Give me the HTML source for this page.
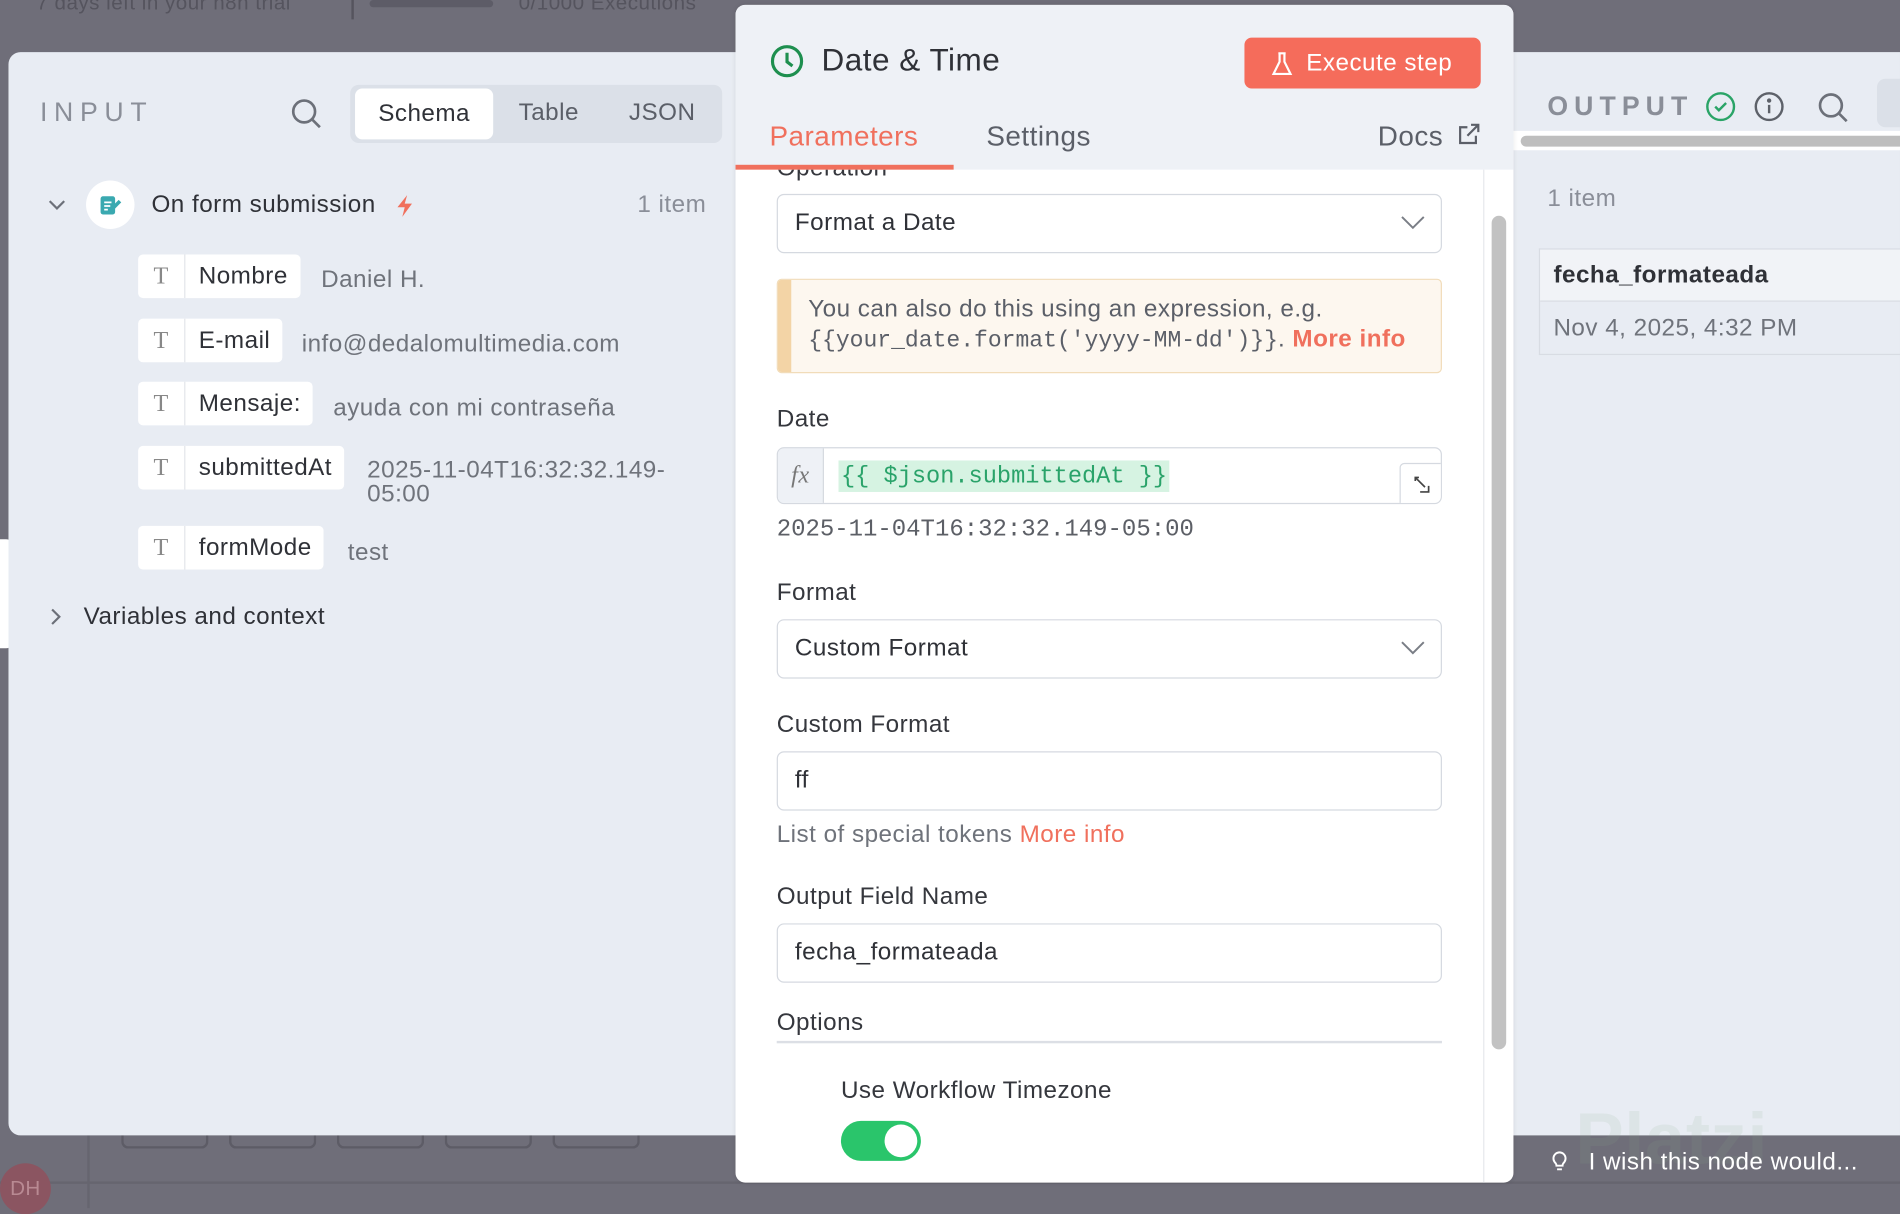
<!DOCTYPE html>
<html><head><meta charset="utf-8"><style>
html,body{margin:0;padding:0;width:1900px;height:1208px;overflow:hidden;background:#6f6e79;}
#w{position:absolute;left:0;top:0;width:1568px;height:997px;transform:scale(1.21173);transform-origin:0 0;font-family:"Liberation Sans",sans-serif;color:#35373d;letter-spacing:0.4px;}
.a{position:absolute;}
.mono{font-family:"Liberation Mono",monospace;letter-spacing:0;}
.lbl{position:absolute;left:641px;font-size:20px;color:#35373d;}
.inp{position:absolute;left:641px;width:549px;height:47px;border:1px solid #d5d9e0;border-radius:6px;background:#fff;box-sizing:border-box;font-size:20px;line-height:45px;padding-left:14px;color:#2f3137;}
.pill{position:absolute;left:114px;height:36px;background:#fff;border-radius:4px;display:flex;align-items:center;font-size:20px;color:#2f3137;}
.pill .t{width:38px;text-align:center;font-family:"Liberation Serif",serif;color:#888;font-size:20px;border-right:1px solid #e3e6ea;height:36px;line-height:36px;}
.pill .n{padding:0 10px 0 11px;}
.val{position:absolute;font-size:20px;color:#6f737b;}
</style></head><body><div id="w">
<!-- top bar -->
<div class="a" style="left:30px;top:-7px;font-size:17px;color:#55545e;">7 days left in your n8n trial</div>
<div class="a" style="left:290px;top:-4px;width:2px;height:20px;background:#55545e"></div>
<div class="a" style="left:305px;top:0;width:102px;height:6px;border-radius:3px;background:#5d5c67"></div>
<div class="a" style="left:428px;top:-7px;font-size:17px;color:#55545e;">0/1000 Executions</div>
<!-- bottom faint stuff -->
<div class="a" style="left:100px;top:930px;width:68px;height:16px;border:2px solid #5d5c66;border-top:none;border-radius:0 0 6px 6px"></div>
<div class="a" style="left:189px;top:930px;width:68px;height:16px;border:2px solid #5d5c66;border-top:none;border-radius:0 0 6px 6px"></div>
<div class="a" style="left:278px;top:930px;width:68px;height:16px;border:2px solid #5d5c66;border-top:none;border-radius:0 0 6px 6px"></div>
<div class="a" style="left:367px;top:930px;width:68px;height:16px;border:2px solid #5d5c66;border-top:none;border-radius:0 0 6px 6px"></div>
<div class="a" style="left:456px;top:930px;width:68px;height:16px;border:2px solid #5d5c66;border-top:none;border-radius:0 0 6px 6px"></div>
<div class="a" style="left:0;top:975px;width:1568px;height:2px;background:#66656f"></div>
<div class="a" style="left:72px;top:937px;width:2px;height:60px;background:#66656f"></div>
<div class="a" style="left:0;top:960px;width:42px;height:42px;border-radius:50%;background:#8b5561;color:#b98a93;font-size:17px;line-height:42px;text-align:center">DH</div>
<div class="a" style="left:0;top:445px;width:11px;height:90px;background:#fff;border-radius:0 6px 6px 0"></div>

<!-- input panel -->
<div class="a" style="left:7px;top:43px;width:640px;height:894px;background:#e8ecf3;border-radius:10px 0 0 10px"></div>
<div class="a" style="left:33px;top:80px;font-size:22px;letter-spacing:5.5px;color:#8a8e98">INPUT</div>
<svg class="a" style="left:240px;top:81px" width="26" height="26" viewBox="0 0 26 26" fill="none" stroke="#6c7079" stroke-width="2.2"><circle cx="11" cy="11" r="9"/><path d="M18 18l6 6"/></svg>
<div class="a" style="left:289px;top:70px;width:307px;height:48px;background:#dbe0e8;border-radius:7px"></div>
<div class="a" style="left:293px;top:73px;width:114px;height:42px;background:#fff;border-radius:6px;font-size:20px;line-height:42px;text-align:center;color:#2f3137">Schema</div>
<div class="a" style="left:428px;top:82px;font-size:20px;color:#5b5f68">Table</div>
<div class="a" style="left:519px;top:82px;font-size:20px;color:#5b5f68">JSON</div>
<svg class="a" style="left:39px;top:162px" width="16" height="14" viewBox="0 0 16 14" fill="none" stroke="#6c7079" stroke-width="1.8"><path d="M2 4l6 6 6-6"/></svg>
<div class="a" style="left:71px;top:149px;width:40px;height:40px;border-radius:50%;background:#fff"></div>
<svg class="a" style="left:81px;top:159px" width="20" height="20" viewBox="0 0 20 20"><rect x="2" y="3" width="12" height="15" rx="2" fill="#3aa9b0"/><path d="M5 8h6M5 11h5M5 14h3" stroke="#fff" stroke-width="1.4"/><path d="M10 15l8-8" stroke="#3aa9b0" stroke-width="3"/></svg>
<div class="a" style="left:125px;top:158px;font-size:20px;color:#2f3137">On form submission</div>
<svg class="a" style="left:325px;top:160px" width="18" height="20" viewBox="0 0 18 20"><path d="M11 1L3 11h6l-2 8 8-11H9z" fill="#f0705d"/></svg>
<div class="a" style="left:526px;top:158px;font-size:20px;color:#8a8e98">1 item</div>

<div class="pill" style="top:210px"><div class="t">T</div><div class="n">Nombre</div></div>
<div class="val" style="left:265px;top:220px">Daniel H.</div>
<div class="pill" style="top:263px"><div class="t">T</div><div class="n">E-mail</div></div>
<div class="val" style="left:249px;top:273px">info@dedalomultimedia.com</div>
<div class="pill" style="top:315px"><div class="t">T</div><div class="n">Mensaje:</div></div>
<div class="val" style="left:275px;top:326px">ayuda con mi contraseña</div>
<div class="pill" style="top:368px"><div class="t">T</div><div class="n">submittedAt</div></div>
<div class="val" style="left:303px;top:378px;line-height:20px">2025-11-04T16:32:32.149-<br>05:00</div>
<div class="pill" style="top:434px"><div class="t">T</div><div class="n">formMode</div></div>
<div class="val" style="left:287px;top:445px">test</div>
<svg class="a" style="left:40px;top:501px" width="12" height="16" viewBox="0 0 12 16" fill="none" stroke="#6c7079" stroke-width="1.8"><path d="M3 2l6 6-6 6"/></svg>
<div class="a" style="left:69px;top:498px;font-size:20px;color:#2f3137">Variables and context</div>

<!-- output panel -->
<div class="a" style="left:1230px;top:43px;width:338px;height:894px;background:#e8ecf3"></div>
<div class="a" style="left:1277px;top:75px;font-size:22px;letter-spacing:5px;color:#8a8e98;font-weight:bold">OUTPUT</div>
<svg class="a" style="left:1407px;top:75px" width="26" height="26" viewBox="0 0 26 26" fill="none" stroke="#2aa467" stroke-width="2"><circle cx="13" cy="13" r="11"/><path d="M8.5 13l3 3 6-6"/></svg>
<svg class="a" style="left:1447px;top:75px" width="26" height="26" viewBox="0 0 26 26" fill="none" stroke="#5d6169" stroke-width="2"><circle cx="13" cy="13" r="11"/><path d="M13 11.5v7"/><circle cx="13" cy="8" r="0.8" fill="#5d6169"/></svg>
<svg class="a" style="left:1500px;top:76px" width="26" height="26" viewBox="0 0 26 26" fill="none" stroke="#6c7079" stroke-width="2.2"><circle cx="11" cy="11" r="9"/><path d="M18 18l6 6"/></svg>
<div class="a" style="left:1549px;top:65px;width:30px;height:40px;background:#dbe0e8;border-radius:7px 0 0 7px"></div>
<div class="a" style="left:1249px;top:108px;width:319px;height:16px;background:#fff"></div>
<div class="a" style="left:1255px;top:112px;width:320px;height:9px;background:#bebebe;border-radius:5px"></div>
<div class="a" style="left:1277px;top:153px;font-size:20px;color:#8a8e98">1 item</div>
<div class="a" style="left:1270px;top:205px;width:300px;height:88px;border:1px solid #d8dce3;box-sizing:border-box;border-right:none"></div>
<div class="a" style="left:1271px;top:206px;width:298px;height:43px;background:#f1f3f7;border-bottom:1px solid #d8dce3;font-size:20px;font-weight:bold;line-height:43px;padding-left:11px;box-sizing:border-box;color:#2f3137">fecha_formateada</div>
<div class="a" style="left:1282px;top:260px;font-size:20px;color:#6f737b">Nov 4, 2025, 4:32 PM</div>
<div class="a" style="left:1300px;top:905px;font-size:60px;font-weight:bold;color:rgba(140,170,140,0.12)">Platzi</div>
<svg class="a" style="left:1278px;top:947px" width="18" height="22" viewBox="0 0 18 22" fill="none" stroke="#fff" stroke-width="1.6"><path d="M5 12a5 5 0 1 1 8 0c-1 1-1.5 2-1.5 3h-5c0-1-.5-2-1.5-3z"/><path d="M7 18h4"/></svg>
<div class="a" style="left:1311px;top:948px;font-size:20px;color:#fff">I wish this node would...</div>

<!-- center panel -->
<div class="a" style="left:607px;top:4px;width:642px;height:972px;background:#fff;border-radius:8px;overflow:hidden;box-shadow:0 0 4px rgba(0,0,0,0.1)">
  <div class="a" style="left:34px;top:124px;font-size:20px;color:#35373d">Operation</div>
  <div class="a" style="left:0;top:0;width:642px;height:136px;background:#eef1f6"></div>
  <div class="a" style="left:0;top:132px;width:180px;height:4px;background:#f0705d"></div>
</div>
<svg class="a" style="left:635px;top:36px" width="29" height="29" viewBox="0 0 29 29" fill="none" stroke="#1e8f4f" stroke-width="2.6"><circle cx="14.5" cy="14.5" r="12"/><path d="M14.5 7.5v7.5l4.5 3.5"/></svg>
<div class="a" style="left:678px;top:34px;font-size:26px;color:#2f3137">Date &amp; Time</div>
<div class="a" style="left:1027px;top:31px;width:195px;height:42px;background:#f56c5b;border-radius:6px"></div>
<svg class="a" style="left:1048px;top:42px" width="20" height="22" viewBox="0 0 20 22" fill="none" stroke="#fff" stroke-width="1.8"><path d="M7 2h6M8 2v7L3 19h14L12 9V2"/></svg>
<div class="a" style="left:1078px;top:41px;font-size:20px;color:#fff">Execute step</div>
<div class="a" style="left:635px;top:99px;font-size:23px;color:#f0705d">Parameters</div>
<div class="a" style="left:814px;top:99px;font-size:23px;color:#5b5f68">Settings</div>
<div class="a" style="left:1137px;top:99px;font-size:23px;color:#5b5f68">Docs</div>
<svg class="a" style="left:1202px;top:101px" width="20" height="20" viewBox="0 0 20 20" fill="none" stroke="#5b5f68" stroke-width="1.8"><path d="M9 4H3v13h13v-6M12 2h6v6M18 2l-9 9"/></svg>
<!-- scrollbar -->
<div class="a" style="left:1224px;top:140px;width:1px;height:836px;background:#e6e8ec"></div>
<div class="a" style="left:1231px;top:178px;width:12px;height:688px;background:#c2c2c2;border-radius:6px"></div>

<div class="inp" style="top:160px;height:49px;line-height:47px">Format a Date</div>
<svg class="a" style="left:1156px;top:178px" width="20" height="12" viewBox="0 0 20 12" fill="none" stroke="#7a7e86" stroke-width="1.6"><path d="M1 1l9 9 9-9"/></svg>
<div class="a" style="left:641px;top:230px;width:549px;height:78px;background:#fdf7ef;border:1px solid #f1dcb9;box-sizing:border-box;border-radius:4px;overflow:hidden">
  <div style="position:absolute;left:0;top:0;width:11px;height:78px;background:#f3d4a6"></div>
  <div style="position:absolute;left:25px;top:13px;font-size:20px;color:#5b5f68;white-space:nowrap">You can also do this using an expression, e.g.</div>
  <div style="position:absolute;left:25px;top:38px;font-size:20px;color:#5b5f68;white-space:nowrap"><span class="mono" style="font-size:19px">{{your_date.format('yyyy-MM-dd')}}</span>. <span style="color:#f0705d;font-weight:bold">More info</span></div>
</div>
<div class="lbl" style="top:335px">Date</div>
<div class="inp" style="top:369px;padding:0;overflow:hidden">
  <div style="position:absolute;left:0;top:0;width:37px;height:47px;background:#eef1f6;border-right:1px solid #d5d9e0;font-family:'Liberation Serif',serif;font-style:italic;color:#777;font-size:20px;text-align:center;line-height:44px">fx</div>
  <div class="mono" style="position:absolute;left:50px;top:10px;height:26px;line-height:26px;background:#d6f3e2;color:#2aa36a;font-size:19.5px;padding:0 2px">{{ $json.submittedAt }}</div>
  <div style="position:absolute;left:513px;top:12px;width:36px;height:36px;border:1px solid #d5d9e0;border-radius:4px 0 0 0;background:#fff"></div>
  <svg style="position:absolute;left:523px;top:22px" width="16" height="16" viewBox="0 0 16 16" fill="none" stroke="#444" stroke-width="1.4"><path d="M3 5V2h3M3 2l8 8M14 9v5H7"/></svg>
</div>
<div class="a mono" style="left:641px;top:426px;font-size:19.8px;color:#5c5f66">2025-11-04T16:32:32.149-05:00</div>
<div class="lbl" style="top:478px">Format</div>
<div class="inp" style="top:511px;height:49px;line-height:47px">Custom Format</div>
<svg class="a" style="left:1156px;top:529px" width="20" height="12" viewBox="0 0 20 12" fill="none" stroke="#7a7e86" stroke-width="1.6"><path d="M1 1l9 9 9-9"/></svg>
<div class="lbl" style="top:587px">Custom Format</div>
<div class="inp" style="top:620px;height:49px;line-height:47px">ff</div>
<div class="a" style="left:641px;top:678px;font-size:20px;color:#6f737b">List of special tokens <span style="color:#f0705d">More info</span></div>
<div class="lbl" style="top:729px">Output Field Name</div>
<div class="inp" style="top:762px;height:49px;line-height:47px">fecha_formateada</div>
<div class="lbl" style="top:833px">Options</div>
<div class="a" style="left:641px;top:859px;width:549px;height:2px;background:#dcdfe5"></div>
<div class="a" style="left:694px;top:889px;font-size:20px;color:#35373d">Use Workflow Timezone</div>
<div class="a" style="left:694px;top:925px;width:66px;height:33px;border-radius:17px;background:#2ac56b"></div>
<div class="a" style="left:730px;top:928px;width:27px;height:27px;border-radius:50%;background:#fff"></div>
</div></body></html>
